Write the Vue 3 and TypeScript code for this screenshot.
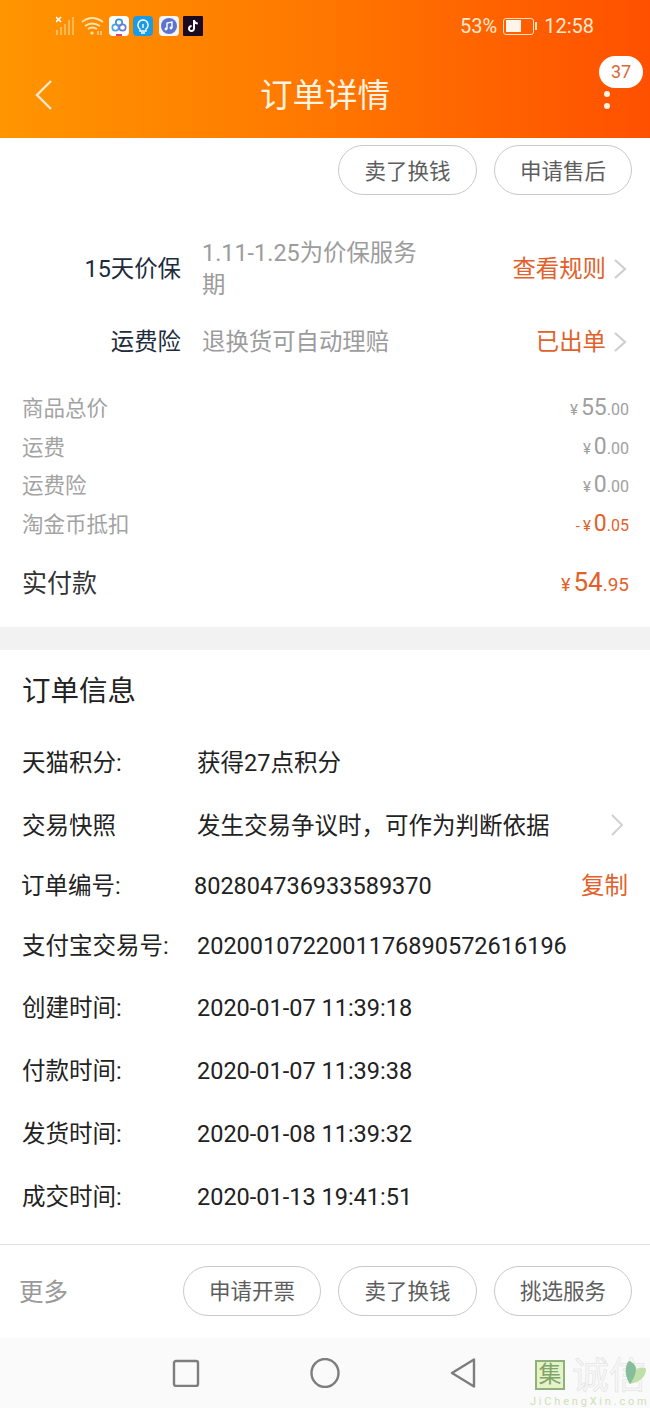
<script setup lang="ts">
const prices = [
  { label: '商品总价', sign: '', int: '55', dec: '00', hot: false },
  { label: '运费', sign: '', int: '0', dec: '00', hot: false },
  { label: '运费险', sign: '', int: '0', dec: '00', hot: false },
  { label: '淘金币抵扣', sign: '-', int: '0', dec: '05', hot: true },
]
const times = [
  { label: '创建时间:', value: '2020-01-07 11:39:18' },
  { label: '付款时间:', value: '2020-01-07 11:39:38' },
  { label: '发货时间:', value: '2020-01-08 11:39:32' },
  { label: '成交时间:', value: '2020-01-13 19:41:51' },
]
</script>

<template>
  <div class="page">
    <header class="top">
      <div class="status">
        <div class="status-left">
          <svg class="sig" width="20" height="20" viewBox="0 0 20 20">
            <path d="M0 1l5 5M5 1L0 6" stroke="#fff" stroke-width="1.6" />
            <path d="M1 14v5M5 11v8M9 8v11M13 4v15M17 1v18" stroke="#ffc56e" stroke-width="1.6" fill="none" />
          </svg>
          <svg class="wifi" width="23" height="20" viewBox="0 0 23 20" fill="none" stroke="#ffe3b0" stroke-width="1.8">
            <path d="M1 6q10-8 21 0M4 10q7-5 15 0M7 13q4-3 9 0" />
            <circle cx="11" cy="17" r="1.6" fill="#ffe3b0" stroke="none" />
            <path d="M17 15v4M20 15v4" stroke-width="1.2" />
          </svg>
          <span class="app app-a">
            <svg width="20" height="20" viewBox="0 0 20 20" fill="none" stroke-width="1.7">
              <circle cx="10" cy="6.5" r="3.2" stroke="#3f8fd8" />
              <circle cx="6.5" cy="11.5" r="3.2" stroke="#4aa6e0" />
              <circle cx="13.5" cy="11.5" r="3.2" stroke="#6a7bd8" />
              <path d="M7 19h6" stroke="#d8487a" stroke-width="2" />
            </svg>
          </span>
          <span class="app app-b">
            <svg width="20" height="20" viewBox="0 0 20 20" fill="none" stroke="#fff" stroke-width="1.4">
              <path d="M10 4a5 5 0 0 1 3 9v2H7v-2a5 5 0 0 1 3-9zM8 17h4" />
              <path d="M10 8v4" />
            </svg>
          </span>
          <span class="app app-c">
            <svg width="18" height="18" viewBox="0 0 18 18">
              <circle cx="9" cy="9" r="8" fill="#5d73d0" />
              <path d="M7 12V6l5-1v6" stroke="#fff" stroke-width="1.4" fill="none" />
              <circle cx="6" cy="12" r="1.4" fill="#fff" />
              <circle cx="11" cy="11" r="1.4" fill="#fff" />
            </svg>
          </span>
          <span class="app app-d">
            <svg width="20" height="20" viewBox="0 0 20 20" fill="none">
              <path d="M11 4v8.6a2.5 2.5 0 1 1-2.4-2.5" stroke="#fff" stroke-width="2" />
              <path d="M11 4.4q.8 3 3.8 3.2" stroke="#fff" stroke-width="2" />
            </svg>
          </span>
        </div>
        <div class="status-right">
          <span>53%</span>
          <span class="battery"><i class="bat-fill"></i></span>
          <span class="bat-tip"></span>
          <span class="clock">12:58</span>
        </div>
      </div>
      <div class="nav">
        <svg class="back" width="20" height="32" viewBox="0 0 20 32" fill="none" stroke="#ffe9cf" stroke-width="2.4">
          <path d="M17 2L3 16l14 14" />
        </svg>
        <h1 class="title">订单详情</h1>
        <div class="more">
          <span class="badge">37</span>
          <i class="dot"></i>
          <i class="dot"></i>
        </div>
      </div>
    </header>

    <main class="content">
      <div class="actions actions-top">
        <button class="pill">卖了换钱</button>
        <button class="pill">申请售后</button>
      </div>

      <section class="services">
        <div class="service service-tall">
          <span class="svc-name">15天价保</span>
          <span class="svc-desc">1.11-1.25为价保服务期</span>
          <span class="svc-link">查看规则<svg class="chev" width="14" height="22" viewBox="0 0 14 22" fill="none" stroke="#cfcfcf" stroke-width="2.2"><path d="M2 2l10 9-10 9" /></svg></span>
        </div>
        <div class="service">
          <span class="svc-name">运费险</span>
          <span class="svc-desc">退换货可自动理赔</span>
          <span class="svc-link">已出单<svg class="chev" width="14" height="22" viewBox="0 0 14 22" fill="none" stroke="#cfcfcf" stroke-width="2.2"><path d="M2 2l10 9-10 9" /></svg></span>
        </div>
      </section>

      <section class="prices">
        <div v-for="p in prices" :key="p.label" class="price-row">
          <span class="price-label">{{ p.label }}</span>
          <span class="price" :class="{ hot: p.hot }"><small v-if="p.sign" class="minus">{{ p.sign }}</small><small class="yen">¥</small><b class="int">{{ p.int }}</b><small class="dec">.{{ p.dec }}</small></span>
        </div>
        <div class="total">
          <span class="total-label">实付款</span>
          <span class="price hot total-price"><small class="yen">¥</small><b class="int">54</b><small class="dec">.95</small></span>
        </div>
      </section>

      <div class="band"></div>

      <section class="info">
        <h2 class="info-title">订单信息</h2>
        <div class="info-row r1"><span class="k">天猫积分:</span><span class="v">获得27点积分</span></div>
        <div class="info-row r2">
          <span class="k">交易快照</span><span class="v">发生交易争议时，可作为判断依据</span>
          <svg class="chev-info" width="14" height="24" viewBox="0 0 14 24" fill="none" stroke="#cfcfcf" stroke-width="1.8"><path d="M2 2l10 10L2 22" /></svg>
        </div>
        <div class="info-row r3"><span class="k k-order">订单编号:</span><span class="v v-order">802804736933589370</span><span class="copy">复制</span></div>
        <div class="info-row r4"><span class="k">支付宝交易号:</span><span class="v">2020010722001176890572616196</span></div>
        <div v-for="t in times" :key="t.label" class="info-row time"><span class="k">{{ t.label }}</span><span class="v">{{ t.value }}</span></div>
      </section>
    </main>

    <footer class="bottom">
      <span class="more-text">更多</span>
      <div class="actions">
        <button class="pill">申请开票</button>
        <button class="pill">卖了换钱</button>
        <button class="pill">挑选服务</button>
      </div>
    </footer>

    <div class="sysbar">
      <svg width="28" height="28" viewBox="0 0 28 28" fill="none" stroke="#7d7d7d" stroke-width="2.4"><rect x="2" y="2" width="24" height="25" rx="2" /></svg>
      <svg width="30" height="30" viewBox="0 0 30 30" fill="none" stroke="#7d7d7d" stroke-width="2.4"><ellipse cx="15" cy="15" rx="13.5" ry="14" /></svg>
      <svg width="26" height="30" viewBox="0 0 26 30" fill="none" stroke="#7d7d7d" stroke-width="2.4" stroke-linejoin="round"><path d="M24 1.5v27L2 15z" /></svg>
    </div>

    <div class="mark">
      <span class="mark-box">集</span>
      <span class="mark-cn">诚信</span>
      <svg class="mark-leaf" width="22" height="26" viewBox="0 0 22 26">
        <path d="M5 24C-1 15 0 5 4 1c5 2 7 5 7 9 3-3 8-3 10-1 0 8-6 13-16 15z" fill="#bfe0a8" />
        <path d="M5 24C-1 15 0 5 4 1c5 2 7 5 7 9-1 6-3 10-6 14z" fill="#86bd9c" />
      </svg>
      <span class="mark-en">JiChengXin.com</span>
    </div>
  </div>
</template>

<style>
html, body { margin: 0; background: #fff; }
</style>

<style scoped>
.page {
  position: relative;
  width: 650px;
  height: 1408px;
  overflow: hidden;
  background: #fff;
  display: flex;
  flex-direction: column;
  font-family: Roboto, "Noto Sans CJK SC", sans-serif;
}
.top {
  height: 138px;
  flex: none;
  box-sizing: border-box;
  padding-top: 14px;
  background: linear-gradient(90deg, #ff9500 0%, #ff7a00 45%, #ff5000 100%);
}
.status {
  height: 24px;
  display: flex;
  justify-content: space-between;
  align-items: center;
  padding: 0 56px;
  color: #ffe9cf;
}
.status-left { display: flex; align-items: center; gap: 4px; }
.sig { margin-right: 1px; }
.wifi { margin-right: 1px; }
.app {
  width: 20px;
  height: 20px;
  border-radius: 4px;
  display: flex;
  align-items: center;
  justify-content: center;
  overflow: hidden;
}
.app-a { background: #fff; }
.app-b { background: #1a9be6; }
.app-c { background: #f4f4fb; margin-left: 2px; }
.app-d { background: #1c0a20; border-radius: 1px; }
.status-right { display: flex; align-items: center; font-size: 20px; }
.battery {
  margin-left: 6px;
  width: 31px;
  height: 17px;
  box-sizing: border-box;
  border: 1.5px solid #ffe0c0;
  border-radius: 3px;
  padding: 1.5px;
  display: flex;
}
.bat-fill { width: 58%; background: #fff4e8; }
.bat-tip { width: 2px; height: 8px; background: #ffe0c0; margin-left: 1px; }
.clock { margin-left: 7px; }
.nav {
  position: relative;
  height: 100px;
  display: flex;
  align-items: center;
  justify-content: center;
}
.back { position: absolute; left: 34px; top: 41px; }
.title {
  margin: 15px 0 0;
  font-size: 32.5px;
  line-height: 40px;
  font-weight: 400;
  color: #fff3e2;
}
.more { position: absolute; left: 599px; top: 18px; width: 44px; height: 50px; }
.badge {
  display: block;
  width: 44px;
  height: 32px;
  border-radius: 16px;
  background: #fff;
  color: #d8673a;
  font-size: 18px;
  line-height: 32px;
  text-align: center;
}
.dot {
  position: absolute;
  left: 5px;
  width: 6px;
  height: 6px;
  border-radius: 50%;
  background: #fff3e2;
}
.dot:nth-of-type(1) { top: 35px; }
.dot:nth-of-type(2) { top: 47px; }
.content { flex: 1; min-height: 0; }
.actions { display: flex; gap: 17px; }
.actions-top { justify-content: flex-end; padding: 7px 17.6px 0 0; }
.pill {
  width: 138.6px;
  height: 50px;
  box-sizing: border-box;
  border: 1px solid #c9c9c9;
  border-radius: 25px;
  background: #fff;
  color: #5e5e5e;
  font: inherit;
  font-size: 21.5px;
  line-height: 30px;
  padding: 3px 0 0;
}
.services { padding-top: 40px; }
.service {
  display: grid;
  grid-template-columns: 181px 228px 1fr;
  column-gap: 21px;
  align-items: center;
  box-sizing: border-box;
  padding: 2px 23px 0 0;
  font-size: 23.4px;
  line-height: 32px;
  min-height: 40px;
}
.service-tall { min-height: 66px; margin-bottom: 20px; }
.svc-name { text-align: right; color: #1d2b3c; }
.svc-desc { color: #9c9c9c; }
.svc-link {
  display: flex;
  align-items: center;
  justify-content: flex-end;
  color: #e2612a;
}
.chev { margin-left: 7px; }
.prices { padding: 27px 21px 0 22px; }
.price-row {
  height: 38.7px;
  box-sizing: border-box;
  padding-top: 3px;
  display: flex;
  justify-content: space-between;
  align-items: center;
  line-height: 30px;
}
.price-label { font-size: 21.5px; color: #a3a3a3; }
.price { color: #a0a0a0; display: flex; align-items: baseline; }
.price .minus { font-size: 15px; margin-right: 3px; }
.price .yen { font-size: 15px; margin-right: 3px; }
.price .int { font-size: 23px; font-weight: 400; }
.price .dec { font-size: 16px; }
.price.hot { color: #e2612a; }
.total {
  height: 60px;
  box-sizing: border-box;
  padding-top: 2px;
  margin-top: 10px;
  display: flex;
  justify-content: space-between;
  align-items: center;
  line-height: 34px;
}
.total-label { font-size: 25px; color: #333; }
.total-price .yen { font-size: 18px; }
.total-price .int { font-size: 26px; }
.total-price .dec { font-size: 19px; }
.band { height: 23px; background: #f2f2f2; margin-top: 14px; }
.info { padding: 0 22px; }
.info-title {
  margin: 0;
  padding-top: 23px;
  height: 80px;
  box-sizing: border-box;
  font-size: 28.5px;
  line-height: 38px;
  font-weight: 400;
  color: #222;
}
.info-row {
  position: relative;
  display: flex;
  align-items: center;
  box-sizing: border-box;
  padding-top: 2px;
  height: 63px;
  font-size: 23.5px;
  line-height: 30px;
  color: #222;
}
.k { width: 175px; flex: none; white-space: nowrap; }
.r1 { height: 64px; }
.r2 { height: 62px; }
.r3 { height: 58px; }
.r4 { height: 62px; }
.k-order { margin-left: -1px; width: 173px; }
.copy { margin-left: auto; color: #e2612a; }
.chev-info { position: absolute; right: 4px; top: 19px; }
.bottom {
  flex: none;
  height: 94px;
  box-sizing: border-box;
  border-top: 1px solid #e2e2e2;
  display: flex;
  align-items: center;
  justify-content: space-between;
  padding: 0 17.6px 2px 19px;
}
.more-text { font-size: 24.5px; line-height: 32px; padding-top: 4px; color: #9a9a9a; }
.sysbar {
  flex: none;
  height: 70px;
  background: #fafafa;
  display: flex;
  align-items: center;
  gap: 110px;
  padding-left: 172px;
}
.mark {
  position: absolute;
  left: 530px;
  top: 1360px;
  width: 120px;
  height: 48px;
}
.mark-box {
  position: absolute;
  left: 5px;
  top: 0;
  width: 30px;
  height: 30px;
  box-sizing: border-box;
  background: #e6f3c9;
  border: 2px solid #8fb27d;
  color: #7fa56c;
  font-size: 23px;
  line-height: 26px;
  text-align: center;
}
.mark-cn {
  position: absolute;
  left: 42px;
  top: -1px;
  font-size: 37px;
  line-height: 36px;
  height: 36px;
  color: #f7f7f7;
  -webkit-text-stroke: 0.5px #dcdfdd;
  white-space: nowrap;
}
.mark-leaf { position: absolute; left: 95px; top: 0; }
.mark-en {
  position: absolute;
  left: 0;
  top: 36px;
  font-size: 11px;
  line-height: 12px;
  letter-spacing: 2.8px;
  color: #cfe0b8;
  white-space: nowrap;
}
</style>
